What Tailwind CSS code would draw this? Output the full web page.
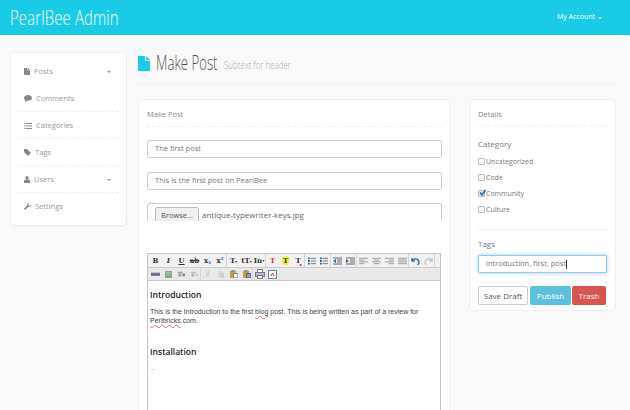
<!DOCTYPE html>
<html><head><meta charset="utf-8">
<script src="https://cdn.jsdelivr.net/npm/@tailwindcss/browser@4"></script>
</head>
<body class="m-0">
<div class="w-[630px] h-[410px] overflow-hidden bg-[#f9f9f9] font-['Open_Sans',sans-serif] text-[#777]">
  <header class="h-[35px] bg-[#19cbe6] flex items-center justify-between pl-[10px] pr-[28px] text-white">
    <div class="text-[20px] font-light leading-[35px] origin-left scale-x-[0.745] whitespace-nowrap tracking-[0.2px]">PearlBee Admin</div>
    <div class="flex items-center gap-[3px] text-[7px] font-medium"><span>My Account</span><span class="w-0 h-0 border-x-[2.5px] border-x-transparent border-t-[2.5px] border-t-white"></span></div>
  </header>
  <div class="flex pt-[17px] pl-[10px]">
    <aside class="w-[117px] h-[174px] bg-white border border-[#eee] rounded-[5px] px-[7px] pt-[5px] shrink-0 shadow-[0_1px_1px_rgba(0,0,0,0.03)]">
      <div class="h-[27px] flex items-center text-[7.5px] text-[#999] pl-[6px] gap-[4px]">
        <svg class="w-[6px] h-[7px]" viewBox="0 0 6 7"><path d="M0 0h3.500v2.500H6V7H0zM4 0l2 2H4z" fill="#888"/></svg><span>Posts</span>
        <span class="ml-auto mr-[8px] w-0 h-0 border-x-[2.500px] border-x-transparent border-t-[2.500px] border-t-[#999]"></span>
      </div>
      <div class="h-[27px] pt-[1px] flex items-center text-[7.5px] text-[#999] pl-[6px] gap-[4px] border-b border-dashed border-[#f0f0f0]">
        <svg class="w-[8px] h-[7px]" viewBox="0 0 8 7"><path d="M4 0C2 0 0 1 0 3c0 1 .6 1.700 1.300 2.200L1 7l2.200-1.200H4c2 0 4-1 4-2.800S6 0 4 0z" fill="#888"/></svg><span>Comments</span>
      </div>
      <div class="h-[27px] pt-[1px] flex items-center text-[7.5px] text-[#999] pl-[6px] gap-[4px] border-b border-dashed border-[#f0f0f0]">
        <svg class="w-[8px] h-[6px]" viewBox="0 0 8 6"><path d="M0 0h1.200v1H0zM2 0h6v1H2zM0 2.500h1.200v1H0zM2 2.500h6v1H2zM0 5h1.200v1H0zM2 5h6v1H2z" fill="#888"/></svg><span>Categories</span>
      </div>
      <div class="h-[27px] pt-[1px] flex items-center text-[7.5px] text-[#999] pl-[6px] gap-[4px] border-b border-dashed border-[#f0f0f0]">
        <svg class="w-[7px] h-[7px]" viewBox="0 0 7 7"><path d="M0 0h3l4 4-3 3-4-4z" fill="#888"/></svg><span>Tags</span>
      </div>
      <div class="h-[27px] pt-[1px] flex items-center text-[7.5px] text-[#999] pl-[6px] gap-[4px] border-b border-dashed border-[#f0f0f0]">
        <svg class="w-[6px] h-[7px]" viewBox="0 0 6 7"><circle cx="3" cy="1.700" r="1.700" fill="#888"/><path d="M0 7V5c0-1 1-1.800 3-1.800S6 4 6 5v2z" fill="#888"/></svg><span>Users</span>
        <span class="ml-auto mr-[8px] w-0 h-0 border-x-[2.500px] border-x-transparent border-t-[2.500px] border-t-[#999]"></span>
      </div>
      <div class="h-[27px] flex items-center text-[7.5px] text-[#999] pl-[6px] gap-[4px]">
        <svg class="w-[7px] h-[7px]" viewBox="0 0 7 7"><path d="M7 1.500 5.500 3 4.500 2.500 4 1.500 5.500 0C4.200-.2 3 .8 3 2c0 .3 0 .5.100.7L0 5.800 1.200 7l3.100-3.100c1.400.4 2.900-.9 2.700-2.400z" fill="#888"/></svg><span>Settings</span>
      </div>
    </aside>
    <main class="ml-[11px] w-[479px] shrink-0">
      <div class="h-[27px] flex items-start border-b border-[#f2f2f2] w-[478px] pt-[4px] box-content">
        <svg class="w-[12px] h-[15px] shrink-0" viewBox="0 0 12 15"><path d="M0 0h7v5h5v10H0zM8 0l4 4H8z" fill="#19cbe6"/></svg>
        <h1 class="ml-[6px] -mt-[2px] text-[20px] font-light leading-[18px] text-[#555] origin-left scale-x-[0.66] whitespace-nowrap">Make Post</h1>
        <span class="ml-[-25px] mt-[2px] text-[11px] font-light leading-[14px] text-[#aaa] origin-left scale-x-[0.72] whitespace-nowrap">Subtext for header</span>
      </div>
      <div class="flex mt-[15px] items-start">
        <section class="w-[313px] h-[330px] bg-white border border-[#eee] rounded-[5px] px-[8px] shrink-0">
          <div class="h-[27px] pt-[7px] text-[7.5px] leading-[14px] text-[#888] border-b border-dashed border-[#f0f0f0]">Make Post</div>
          <div class="mt-[13px] h-[18px] border border-[#ccc] rounded-[3px] flex items-center pl-[7px] text-[7.5px] text-[#777]">The first post</div>
          <div class="mt-[14px] h-[18px] border border-[#ccc] rounded-[3px] flex items-center pl-[7px] text-[7.5px] text-[#777]">This is the first post on PearlBee</div>
          <div class="mt-[13px] h-[18px] border-x border-t border-[#ccc] rounded-t-[3px] flex items-start pl-[7px] pt-[3px] text-[7.5px] text-[#666] overflow-hidden">
            <span class="h-[18px] w-[44px] shrink-0 border border-[#bbb] rounded-[2px] bg-[#f0f0f0] text-center leading-[15px] text-[#555]">Browse...</span>
            <span class="ml-[3px] leading-[15px] text-[8px]">antique-typewriter-keys.jpg</span>
          </div>
          <div class="mt-[32px] w-[294px] h-[200px] border-x border-t border-[#c4c4c4]">
            <div class="h-[27px] flex flex-col border-b border-[#c9c9c9]">
              <div class="h-[14px] bg-[#f1f1f1] flex items-center pl-[1px] border-b border-[#ccc] font-['DejaVu_Serif',serif] text-[7px] font-bold text-[#333] leading-none whitespace-nowrap">
                <span class="w-[13px] text-center">B</span><span class="w-[13px] text-center italic">I</span><span class="w-[13px] text-center underline">U</span><span class="w-[13px] text-center line-through">ab</span><span class="w-[13px] text-center">x<sub class="text-[4px] text-[#26c]">2</sub></span><span class="w-[13px] h-[13px] flex items-center justify-center border-r border-[#d5d5d5]">x<sup class="text-[4px] text-[#26c]">2</sup></span>
                <span class="w-[13px] text-center">T<span class="text-[4px]">▾</span></span><span class="w-[13px] text-center">tT<span class="text-[4px]">▾</span></span><span class="w-[13px] h-[13px] flex items-center justify-center border-r border-[#d5d5d5]">In<span class="text-[4px]">▾</span></span>
                <span class="w-[13px] text-center text-[#e33]">T</span><span class="w-[13px] text-center"><span class="bg-[#ee2] rounded-full px-[1px]">T</span></span><span class="w-[13px] h-[13px] flex items-center justify-center relative border-r border-[#d5d5d5]">T<span class="absolute right-[2px] bottom-0 text-[4px] text-red-600">x</span></span>
                <span class="w-[13px] flex justify-center"><svg class="w-[8px] h-[8px]" viewBox="0 0 9 8"><path d="M0 0h2v2H0zM0 3h2v2H0zM0 6h2v2H0z" fill="#26a"/><path d="M3 1h6M3 4h6M3 7h6" stroke="#666"/></svg></span>
                <span class="w-[13px] h-[13px] flex items-center justify-center border-r border-[#d5d5d5]"><svg class="w-[8px] h-[8px]" viewBox="0 0 9 8"><path d="M0 0h2v2H0zM0 3h2v2H0zM0 6h2v2H0z" fill="#26a"/><path d="M3 1h6M3 4h6M3 7h6" stroke="#666"/></svg></span>
                <span class="w-[13px] flex justify-center"><svg class="w-[9px] h-[8px]" viewBox="0 0 9 8"><path d="M0 1h9M4 3h5M4 5h5M0 7h9" stroke="#666"/><path d="M3 2v4L0 4z" fill="#26a"/></svg></span>
                <span class="w-[13px] h-[13px] flex items-center justify-center border-r border-[#d5d5d5]"><svg class="w-[9px] h-[8px]" viewBox="0 0 9 8"><path d="M0 1h9M4 3h5M4 5h5M0 7h9" stroke="#666"/><path d="M0 2v4l3-2z" fill="#26a"/></svg></span>
                <span class="w-[13px] flex justify-center"><svg class="w-[9px] h-[8px]" viewBox="0 0 10 8"><path d="M0 1h10M0 3h6M0 5h10M0 7h6" stroke="#999"/></svg></span>
                <span class="w-[13px] flex justify-center"><svg class="w-[9px] h-[8px]" viewBox="0 0 10 8"><path d="M0 1h10M2 3h6M0 5h10M2 7h6" stroke="#999"/></svg></span>
                <span class="w-[13px] flex justify-center"><svg class="w-[9px] h-[8px]" viewBox="0 0 10 8"><path d="M0 1h10M4 3h6M0 5h10M4 7h6" stroke="#999"/></svg></span>
                <span class="w-[13px] h-[13px] flex items-center justify-center border-r border-[#d5d5d5]"><svg class="w-[9px] h-[8px]" viewBox="0 0 10 8"><path d="M0 1h10M0 3h10M0 5h10M0 7h10" stroke="#999"/></svg></span>
                <span class="w-[13px] flex justify-center"><svg class="w-[9px] h-[8px]" viewBox="0 0 9 8"><path d="M1 1v3h3M1.500 4C3 1 7 1 8 5c0 1-.5 2-1.500 3" stroke="#37a" stroke-width="1.500" fill="none"/></svg></span>
                <span class="w-[13px] h-[13px] flex items-center justify-center border-r border-[#d5d5d5]"><svg class="w-[9px] h-[8px]" viewBox="0 0 9 8"><path d="M8 1v3H5M7.500 4C6 1 2 1 1 5c0 1 .5 2 1.500 3" stroke="#bcd" stroke-width="1.500" fill="none"/></svg></span>
              </div>
              <div class="flex-1 bg-[#e9e9e9] flex items-center pl-[1px]">
                <span class="w-[13px] flex justify-center"><svg class="w-[9px] h-[6px]" viewBox="0 0 10 6"><rect y="2" width="10" height="3" fill="#668"/><rect y="1" width="10" height="1" fill="#bbb"/></svg></span>
                <span class="w-[13px] flex justify-center"><svg class="w-[7px] h-[7px]" viewBox="0 0 8 8"><rect width="8" height="8" fill="#8a7"/><rect x="1.500" y="1" width="5" height="3" fill="#9bc"/></svg></span>
                <span class="w-[13px] flex justify-center"><svg class="w-[9px] h-[8px]" viewBox="0 0 10 9"><path d="M1 2h5v2H1z" fill="#8a8"/><path d="M6 4h3v3H6z" fill="#a77"/><circle cx="3" cy="6" r="1.500" fill="#89a"/></svg></span>
                <span class="w-[13px] h-[12px] flex items-center justify-center border-r border-[#d5d5d5]"><svg class="w-[9px] h-[8px]" viewBox="0 0 10 9"><path d="M1 2h5v2H1z" fill="#bbb"/><path d="M6 4h3v3H6z" fill="#ccc"/><circle cx="3" cy="6" r="1.500" fill="#aab"/></svg></span>
                <span class="w-[13px] flex justify-center"><svg class="w-[7px] h-[8px]" viewBox="0 0 8 9"><path d="M2 0l2 5 2-5M1 8l5-4M7 8L2 4" stroke="#ccc" fill="none"/></svg></span>
                <span class="w-[13px] flex justify-center"><svg class="w-[8px] h-[8px]" viewBox="0 0 9 9"><rect x="1" y="1" width="5" height="6" fill="#ddd"/><rect x="3" y="3" width="5" height="6" fill="#d0d0d0"/></svg></span>
                <span class="w-[13px] flex justify-center"><svg class="w-[9px] h-[8px]" viewBox="0 0 10 9"><rect x="1" y="1" width="7" height="8" fill="#c9a040"/><rect x="3" y="0" width="3" height="2" fill="#888"/><rect x="5" y="4" width="5" height="5" fill="#eee" stroke="#778"/></svg></span>
                <span class="w-[13px] h-[12px] flex items-center justify-center border-r border-[#d5d5d5]"><svg class="w-[9px] h-[8px]" viewBox="0 0 10 9"><rect x="1" y="1" width="7" height="8" fill="#c9a040"/><rect x="3" y="0" width="3" height="2" fill="#888"/><rect x="5" y="4" width="5" height="5" fill="#89c" stroke="#558"/></svg></span>
                <span class="w-[13px] flex justify-center"><svg class="w-[10px] h-[10px]" viewBox="0 0 10 10"><rect x="2.500" y=".5" width="5" height="3" fill="#fff" stroke="#778"/><rect x=".5" y="3.500" width="9" height="4" fill="#bbd" stroke="#778"/><rect x="2.500" y="6.500" width="5" height="3" fill="#fff" stroke="#778"/></svg></span>
                <span class="w-[13px] flex justify-center"><svg class="w-[9px] h-[9px]" viewBox="0 0 9 9"><rect x=".5" y=".5" width="8" height="8" fill="#fff" stroke="#68a"/><path d="M3 6l1.500-3L6 6" stroke="#c33" fill="none"/></svg></span>
              </div>
            </div>
            <div class="px-[2px] pt-[8px] font-['Liberation_Sans',sans-serif]">
              <div class="text-[8.5px] leading-[11px] font-semibold font-['Open_Sans',sans-serif] text-[#222]">Introduction</div>
              <p class="mt-[7px] text-[7px] leading-[9px] text-[#444]">This is the Introduction to the first <span class="underline decoration-[#e66] decoration-wavy decoration-[0.5px]">blog</span> post. This is being written as part of a review for <span class="underline decoration-[#e66] decoration-wavy decoration-[0.5px]">Perlbricks</span>.com.</p>
              <div class="mt-[21px] text-[8.5px] leading-[11px] font-semibold font-['Open_Sans',sans-serif] text-[#222]">Installation</div>
              <p class="mt-[7px] text-[6px] leading-[8px] text-[#888]">...</p>
            </div>
          </div>
        </section>
        <section class="ml-[18px] w-[147px] h-[212px] bg-white border border-[#eee] rounded-[5px] px-[8px] shrink-0">
          <div class="h-[26px] pt-[7px] text-[7.5px] leading-[14px] text-[#888] border-b border-dashed border-[#f0f0f0]">Details</div>
          <div class="mt-[12px] text-[8px] leading-[12px] text-[#777]">Category</div>
          <div class="mt-[4px] flex flex-col text-[7px] leading-[16px] text-[#777]">
            <div class="h-[16px] flex items-center"><span class="w-[7px] h-[7px] border border-[#bbb] rounded-[1px] mr-[1px] mb-[2px] bg-[#fafafa]"></span>Uncategorized</div>
            <div class="h-[16px] flex items-center"><span class="w-[7px] h-[7px] border border-[#bbb] rounded-[1px] mr-[1px] mb-[2px] bg-[#fafafa]"></span>Code</div>
            <div class="h-[16px] flex items-center"><span class="w-[7px] h-[7px] border border-[#bbb] rounded-[1px] mr-[1px] mb-[2px] relative bg-[#dfe9f5]"><svg class="absolute left-0 top-[-2px] w-[7px] h-[7px]" viewBox="0 0 7 7"><path d="M1 3.500 3 6l3.500-5" stroke="#2a6fc0" stroke-width="1.600" fill="none"/></svg></span>Community</div>
            <div class="h-[16px] flex items-center"><span class="w-[7px] h-[7px] border border-[#bbb] rounded-[1px] mr-[1px] mb-[2px] bg-[#fafafa]"></span>Culture</div>
          </div>
          <div class="mt-[11px] border-t border-[#eee]"></div>
          <div class="mt-[8px] text-[8px] leading-[12px] text-[#777]">Tags</div>
          <div class="mt-[5px] h-[18px] w-[129px] border border-[#97c8f0] shadow-[0_0_4px_rgba(102,175,233,0.6)] rounded-[1px] flex items-center pl-[7px] text-[7.5px] text-[#777]">introduction, first, post<span class="w-px h-[9px] bg-[#333]"></span></div>
          <div class="mt-[13px] flex text-[8px] leading-[17px] text-center">
            <span class="w-[50px] h-[19px] border border-[#ccc] rounded-[2px] text-[#555] bg-white">Save Draft</span>
            <span class="ml-[2px] w-[41px] h-[19px] rounded-[2px] bg-[#5bc0de] text-white leading-[19px]">Publish</span>
            <span class="ml-[1px] w-[34px] h-[19px] rounded-[2px] bg-[#d9534f] text-white leading-[19px]">Trash</span>
          </div>
        </section>
      </div>
    </main>
  </div>
</div>
</body></html>
